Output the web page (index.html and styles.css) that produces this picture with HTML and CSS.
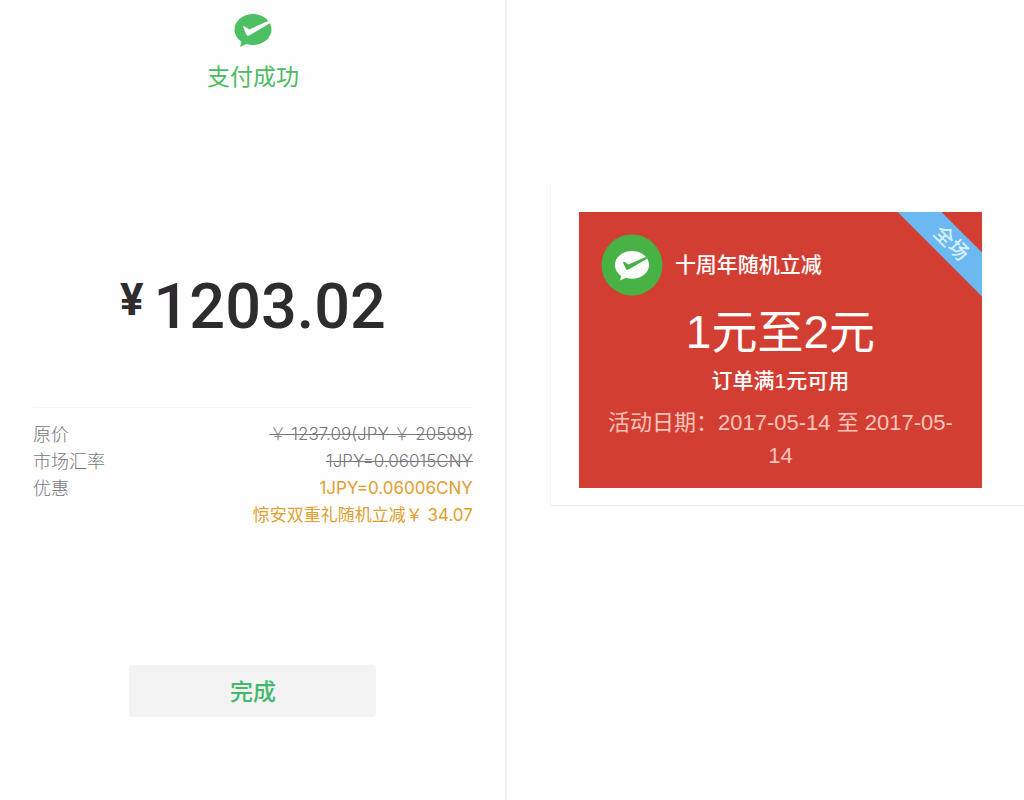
FILE: index.html
```
<!DOCTYPE html>
<html lang="zh-CN">
<head>
  <meta charset="UTF-8" />
  <meta name="viewport" content="width=device-width, initial-scale=1.0"/>
  <title>支付成功</title>
  <link rel="stylesheet" href="styles.css">
</head>
<body>
  <!-- 支付结果 -->
  <main class="pay-result">
    <div class="status">
      <svg class="status-icon" viewBox="0 0 38 34" aria-hidden="true">
        <path fill="#4cc063" d="M19 0C8.800 0 .5 7 .5 15.600c0 5 2.700 9.300 6.900 12.100L6.200 33l6.300-3c2 .7 4.200 1 6.500 1 10.200 0 18.500-6.800 18.500-15.400C37.500 7 29.200 0 19 0z"/>
        <path fill="#fff" d="M9 12.800c.5-.8 1.200-.8 1.900-.3l4.400 3L34.600 6.700l1.600 2.300-21.200 12.600c-.9.500-1.900.3-2.400-.7z"/>
      </svg>
      <h1>支付成功</h1>
    </div>

    <p class="amount"><span class="currency">¥</span>1203.02</p>

    <dl class="detail">
      <div class="detail-row">
        <dt>原价</dt>
        <dd><del>￥ 1237.09(JPY ￥ 20598)</del></dd>
      </div>
      <div class="detail-row">
        <dt>市场汇率</dt>
        <dd><del>1JPY=0.06015CNY</del></dd>
      </div>
      <div class="detail-row discount">
        <dt>优惠</dt>
        <dd>1JPY=0.06006CNY<br>惊安双重礼随机立减￥ 34.07</dd>
      </div>
    </dl>

    <button class="done-btn" type="button">完成</button>
  </main>

  <!-- 优惠券 -->
  <aside class="promo">
    <div class="promo-card">
      <section class="coupon">
        <span class="ribbon">全场</span>
        <div class="coupon-head">
          <svg class="coupon-icon" viewBox="0 0 62 62" aria-hidden="true">
            <circle cx="31" cy="31" r="30.500" fill="#48b344"/>
            <path fill="#fff" d="M31 17c-9.400 0-17 6-17 14 0 4.400 2.400 8.400 6.300 10.900L19 46.500l6-2.700c1.900.6 3.900.9 6 .9 9.400 0 17-5.700 17-13.700S40.400 17 31 17z"/>
            <path fill="#48b344" d="M22 28.500c.4-.8 1.100-.9 1.800-.4l3.600 2.400L44.500 23l1.700 1.800L27 35.700c-.8.400-1.600.2-2-.6z"/>
          </svg>
          <h2>十周年随机立减</h2>
        </div>
        <p class="coupon-value">1元至2元</p>
        <p class="coupon-rule">订单满1元可用</p>
        <p class="coupon-date">活动日期：2017-05-14 至 2017-05-14</p>
      </section>
    </div>
  </aside>
</body>
</html>
```

FILE: styles.css
```
* {
  margin: 0;
  padding: 0;
  box-sizing: border-box;
}

body {
  display: flex;
  min-height: 100vh;
  background: #fefefe;
  color: #2e2c2e;
  font-family: "Liberation Sans", "Noto Sans CJK SC", sans-serif;
}

.pay-result {
  flex: 0 0 49.5%;
  display: flex;
  flex-direction: column;
  align-items: center;
  padding: 14px 32px 40px 33px;
  border-right: 2px solid #f0f0f1;
}

.status {
  display: flex;
  flex-direction: column;
  align-items: center;
  gap: 12px;
}

.status-icon {
  width: 38px;
  height: 34px;
}

.status h1 {
  color: #4cba63;
  font-size: 23px;
  line-height: 34px;
  font-weight: normal;
}

.amount {
  display: flex;
  align-items: flex-start;
  gap: 10px;
  margin-top: 175px;
  font-family: Roboto, sans-serif;
  font-size: 63px;
  line-height: 76px;
  font-weight: 500;
}

.currency {
  font-size: 44px;
  line-height: 62px;
  font-weight: bold;
}

.detail {
  width: 100%;
  margin-top: 62px;
  padding-top: 13px;
  border-top: 1px solid #f6f6f6;
  font-family: Inter, "Noto Sans CJK SC", sans-serif;
  font-size: 18px;
  line-height: 27px;
  font-weight: 300;
}

.detail-row {
  display: flex;
  justify-content: space-between;
  color: #77757a;
}

.detail-row dd {
  text-align: right;
}

.detail-row del {
  display: block;
  font-size: 17px;
}

.discount dd {
  color: #dfa032;
  font-size: 17px;
  font-weight: 400;
}

.done-btn {
  width: 247px;
  height: 52px;
  margin-top: 136px;
  padding-bottom: 2px;
  border: none;
  border-radius: 4px;
  background: #f3f3f4;
  color: #43b86c;
  font-family: "Noto Sans CJK SC", sans-serif;
  font-size: 23px;
  font-weight: 500;
  cursor: pointer;
}

.promo {
  flex: 1;
  padding: 182px 0 40px 43px;
}

.promo-card {
  padding: 30px 42px 17px 28px;
  border-left: 1px solid #f6f6f6;
  border-bottom: 1px solid #f0f0f0;
  background: #fff;
}

.coupon {
  position: relative;
  overflow: hidden;
  padding: 22px 22px 16px;
  background: #d33e33;
  color: #fff;
  text-align: center;
}

.coupon-head {
  display: flex;
  align-items: center;
  gap: 12px;
}

.coupon-icon {
  width: 62px;
  height: 62px;
}

.coupon-head h2 {
  font-size: 21px;
  line-height: 30px;
  font-weight: 500;
}

.coupon-value {
  margin-top: 6px;
  font-size: 46px;
  line-height: 60px;
}

.coupon-rule {
  margin-top: 4px;
  font-size: 21px;
  line-height: 30px;
  font-weight: 500;
}

.coupon-date {
  margin-top: 10px;
  color: #f9c4ba;
  font-size: 22px;
  line-height: 33px;
}

/* 右上角斜条 */
.ribbon {
  position: absolute;
  top: 16px;
  right: -39px;
  width: 140px;
  background: #6cb8f0;
  color: #d9f0ff;
  font-size: 20px;
  line-height: 31px;
  font-weight: 500;
  transform: rotate(45deg);
}
```
